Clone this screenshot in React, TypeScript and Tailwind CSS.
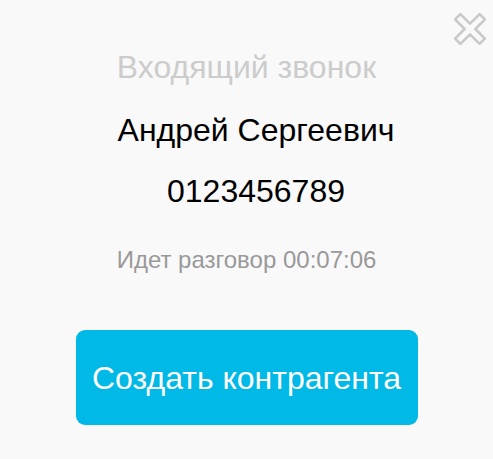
import React from "react";

function CloseIcon() {
  return (
    <svg width="32" height="32" viewBox="0 0 30 30" fill="none">
      <polygon
        points="1,6 6,1 15,10 24,1 29,6 20,15 29,24 24,29 15,20 6,29 1,24 10,15"
        stroke="#c9c9c9"
        strokeWidth="2.4"
        strokeLinejoin="round"
      />
    </svg>
  );
}

export default function App() {
  return (
    <div
      className="relative w-[493px] h-[459px] bg-[#f9f9f9] flex flex-col items-center"
      style={{ fontFamily: '"Liberation Sans", Arial, sans-serif' }}
    >
      <button className="absolute top-[13px] right-[7px] cursor-pointer">
        <CloseIcon />
      </button>

      <div className="mt-[49px] text-[32px] leading-[37px] text-[#cccccc]">
        Входящий звонок
      </div>
      <div className="mt-[26px] ml-[19px] text-[32px] leading-[37px] text-black">
        Андрей Сергеевич
      </div>
      <div className="mt-[24px] ml-[19px] text-[32px] leading-[37px] text-black">
        0123456789
      </div>
      <div className="mt-[36px] text-[24px] leading-[28px] text-[#999999]">
        Идет разговор 00:07:06
      </div>

      <button className="mt-[56px] w-[342px] h-[95px] rounded-[9px] bg-[#00b9e6] text-white text-[32px] cursor-pointer">
        Создать контрагента
      </button>
    </div>
  );
}
